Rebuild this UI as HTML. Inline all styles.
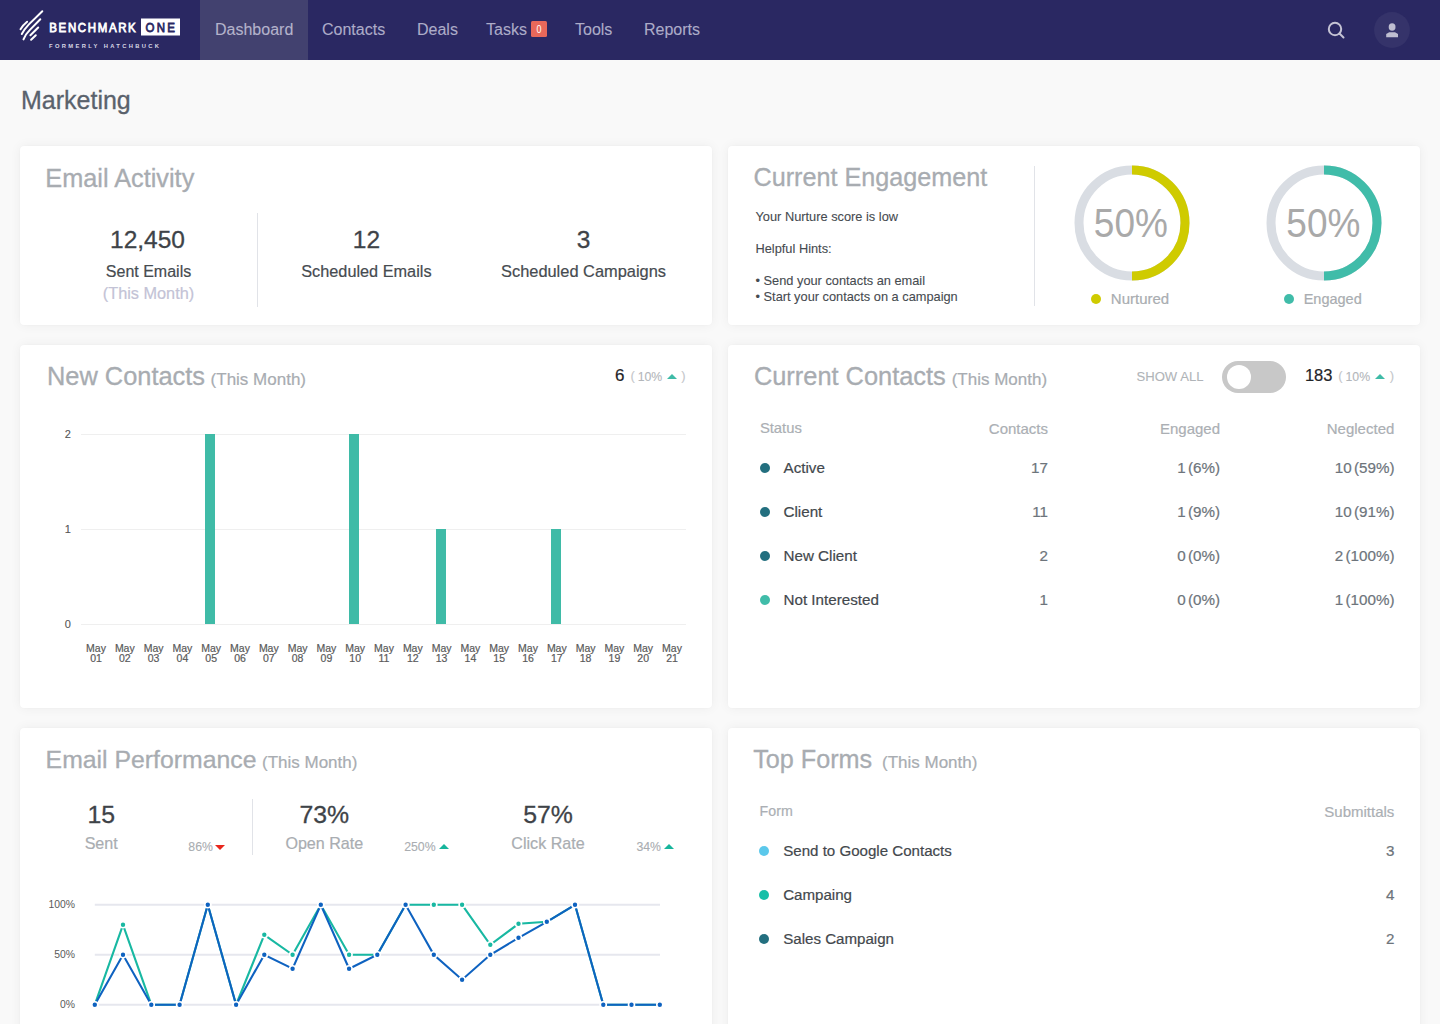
<!DOCTYPE html>
<html><head><meta charset="utf-8"><title>Marketing Dashboard</title>
<style>
html,body{margin:0;padding:0;}
body{width:1440px;height:1024px;overflow:hidden;position:relative;background:#f9f9f9;font-family:"Liberation Sans",sans-serif;}
.t{position:absolute;white-space:nowrap;}
.r{position:absolute;}
.card{position:absolute;background:#fff;border-radius:4px;box-shadow:0 0 12px rgba(0,0,0,0.055),0 0 2px rgba(0,0,0,0.03);}
</style></head><body>
<div class="r" style="left:0px;top:0px;width:1440px;height:60px;background:#2a2862;"></div>
<div class="r" style="left:200px;top:0px;width:108px;height:60px;background:#42416f;"></div>
<div class="t" style="left:215px;top:21.96px;font-size:16px;line-height:16px;color:#b4b3cb;-webkit-text-stroke:0.2px currentColor;-webkit-text-stroke:0.1px currentColor;">Dashboard</div>
<div class="t" style="left:322px;top:21.96px;font-size:16px;line-height:16px;color:#adacc8;-webkit-text-stroke:0.2px currentColor;-webkit-text-stroke:0.1px currentColor;">Contacts</div>
<div class="t" style="left:417px;top:21.96px;font-size:16px;line-height:16px;color:#adacc8;-webkit-text-stroke:0.2px currentColor;-webkit-text-stroke:0.1px currentColor;">Deals</div>
<div class="t" style="left:486px;top:21.96px;font-size:16px;line-height:16px;color:#adacc8;-webkit-text-stroke:0.2px currentColor;-webkit-text-stroke:0.1px currentColor;">Tasks</div>
<div class="t" style="left:575px;top:21.96px;font-size:16px;line-height:16px;color:#adacc8;-webkit-text-stroke:0.2px currentColor;-webkit-text-stroke:0.1px currentColor;">Tools</div>
<div class="t" style="left:644px;top:21.96px;font-size:16px;line-height:16px;color:#adacc8;-webkit-text-stroke:0.2px currentColor;-webkit-text-stroke:0.1px currentColor;">Reports</div>
<div class="r" style="left:531px;top:21px;width:16px;height:16px;background:#e8685a;border-radius:1.5px;"></div>
<div class="t" style="left:531.0px;width:16px;top:24.11px;font-size:10.5px;line-height:10.5px;color:#fff;text-align:center;-webkit-text-stroke:0.1px currentColor;-webkit-text-stroke:0;transform:scaleX(0.85);">0</div>
<svg class="r" style="left:0;top:0" width="190" height="60" viewBox="0 0 190 60">
<g stroke="#fff" stroke-width="2" stroke-linecap="round" fill="none">
<path d="M42.3 11.2 L28.9 24.4 Q24.5 29 21.8 34"/>
<path d="M27.1 21.7 Q23 25 20.5 29.2"/>
<path d="M40.3 19.3 L29.9 29.9 Q25.3 34.5 23.5 39.4"/>
<path d="M38.2 27.5 L30.4 35.3"/>
<path d="M35.8 35.3 L31.1 39.8"/>
</g>
<text transform="translate(49.3,32) scale(1,1.15)" x="0" y="0" textLength="86.5" lengthAdjust="spacing" font-family="Liberation Sans" font-weight="400" font-size="11.5" fill="#fff" stroke="#fff" stroke-width="0.7">BENCHMARK</text>
<rect x="141" y="18.5" width="39" height="17" fill="#fff"/>
<text transform="translate(145.5,32) scale(1,1.15)" x="0" y="0" textLength="29.5" lengthAdjust="spacing" font-family="Liberation Sans" font-weight="400" font-size="11.5" fill="#2a2862" stroke="#2a2862" stroke-width="0.7">ONE</text>
<text x="49" y="48.2" textLength="110" lengthAdjust="spacing" font-family="Liberation Sans" font-weight="700" font-size="5.8" fill="#d8d8e4">FORMERLY HATCHBUCK</text>
</svg>
<svg class="r" style="left:1320;top:14px;left:1320px" width="32" height="32" viewBox="0 0 32 32">
<circle cx="15" cy="15" r="6.2" stroke="#c4c3d4" stroke-width="2" fill="none"/>
<line x1="19.5" y1="19.5" x2="23.5" y2="23.5" stroke="#c4c3d4" stroke-width="2" stroke-linecap="round"/>
</svg>
<svg class="r" style="left:1371.6px;top:9.65px" width="40" height="40" viewBox="0 0 40 40">
<circle cx="20" cy="20" r="17.9" fill="#35336a"/>
<ellipse cx="20.1" cy="16.95" rx="3.4" ry="3.75" fill="#bfbed1"/>
<path d="M14.2 27.35 L14.2 23.9 L17.2 22.3 L23 22.3 L26 23.9 L26 27.35 Z" fill="#bfbed1"/>
</svg>
<div class="t" style="left:21px;top:87.74px;font-size:25px;line-height:25px;color:#5a626c;-webkit-text-stroke:0.3px currentColor;">Marketing</div>
<div class="card" style="left:20px;top:146px;width:692px;height:179px"></div>
<div class="t" style="left:45.3px;top:165.58px;font-size:25.3px;line-height:25.3px;color:#a8acb1;-webkit-text-stroke:0.3px currentColor;">Email Activity</div>
<div class="t" style="left:47.5px;width:200px;top:227.56px;font-size:24.5px;line-height:24.5px;color:#3e4348;text-align:center;-webkit-text-stroke:0.3px currentColor;">12,450</div>
<div class="t" style="left:48.5px;width:200px;top:263.66px;font-size:16px;line-height:16px;color:#464b50;text-align:center;-webkit-text-stroke:0.2px currentColor;">Sent Emails</div>
<div class="t" style="left:48.5px;width:200px;top:284.70px;font-size:16.3px;line-height:16.3px;color:#c3c3d6;text-align:center;-webkit-text-stroke:0.2px currentColor;">(This Month)</div>
<div class="r" style="left:257px;top:213px;width:1px;height:94px;background:#e1e3e8;"></div>
<div class="t" style="left:266.4px;width:200px;top:227.56px;font-size:24.5px;line-height:24.5px;color:#3e4348;text-align:center;-webkit-text-stroke:0.3px currentColor;">12</div>
<div class="t" style="left:266.4px;width:200px;top:263.40px;font-size:16.3px;line-height:16.3px;color:#464b50;text-align:center;-webkit-text-stroke:0.2px currentColor;">Scheduled Emails</div>
<div class="t" style="left:483.5px;width:200px;top:227.56px;font-size:24.5px;line-height:24.5px;color:#3e4348;text-align:center;-webkit-text-stroke:0.3px currentColor;">3</div>
<div class="t" style="left:458.5px;width:250px;top:263.32px;font-size:16.4px;line-height:16.4px;color:#464b50;text-align:center;-webkit-text-stroke:0.2px currentColor;">Scheduled Campaigns</div>
<div class="card" style="left:728px;top:146px;width:692px;height:179px"></div>
<div class="t" style="left:753.5px;top:164.67px;font-size:25.2px;line-height:25.2px;color:#a8acb1;-webkit-text-stroke:0.3px currentColor;">Current Engagement</div>
<div class="t" style="left:755.5px;top:211.36px;font-size:12.8px;line-height:12.8px;color:#464b50;-webkit-text-stroke:0.1px currentColor;">Your Nurture score is low</div>
<div class="t" style="left:755.5px;top:242.96px;font-size:12.8px;line-height:12.8px;color:#464b50;-webkit-text-stroke:0.1px currentColor;">Helpful Hints:</div>
<div class="t" style="left:755.5px;top:274.66px;font-size:12.8px;line-height:12.8px;color:#464b50;-webkit-text-stroke:0.1px currentColor;">• Send your contacts an email</div>
<div class="t" style="left:755.5px;top:290.86px;font-size:12.8px;line-height:12.8px;color:#464b50;-webkit-text-stroke:0.1px currentColor;">• Start your contacts on a campaign</div>
<div class="r" style="left:1034px;top:166px;width:1px;height:140px;background:#e1e3e8;"></div>
<svg class="r" style="left:1071.5px;top:163.3px" width="120" height="120" viewBox="0 0 120 120">
<circle cx="60" cy="60" r="53" stroke="#d9dde3" stroke-width="9" fill="none"/>
<path d="M60 7 A53 53 0 0 1 60 113" stroke="#cfcb00" stroke-width="9" fill="none"/>
</svg>
<svg class="r" style="left:1263.5px;top:163.3px" width="120" height="120" viewBox="0 0 120 120">
<circle cx="60" cy="60" r="53" stroke="#d9dde3" stroke-width="9" fill="none"/>
<path d="M60 7 A53 53 0 0 1 60 113" stroke="#40bca9" stroke-width="9" fill="none"/>
</svg>
<div class="t" style="left:1070.9px;width:120px;top:206.08px;font-size:37px;line-height:37px;color:#a9a9a9;text-align:center;-webkit-text-stroke:0.3px currentColor;transform:scaleY(1.08);transform-origin:50% 86%;-webkit-text-stroke:0;">50%</div>
<div class="t" style="left:1263.4px;width:120px;top:206.08px;font-size:37px;line-height:37px;color:#a9a9a9;text-align:center;-webkit-text-stroke:0.3px currentColor;transform:scaleY(1.08);transform-origin:50% 86%;-webkit-text-stroke:0;">50%</div>
<div class="r" style="left:1091px;top:293.6px;width:10px;height:10px;background:#cfcb00;border-radius:50%;"></div>
<div class="t" style="left:1110.8px;top:291.10px;font-size:15px;line-height:15px;color:#a9adb1;-webkit-text-stroke:0.2px currentColor;">Nurtured</div>
<div class="r" style="left:1284px;top:293.6px;width:10px;height:10px;background:#40bca9;border-radius:50%;"></div>
<div class="t" style="left:1303.7px;top:291.53px;font-size:14.5px;line-height:14.5px;color:#a9adb1;-webkit-text-stroke:0.2px currentColor;">Engaged</div>
<div class="card" style="left:20px;top:345px;width:692px;height:363px"></div>
<div class="t" style="left:47px;top:363.70px;font-size:25.4px;line-height:25.4px;color:#a8acb1;-webkit-text-stroke:0.3px currentColor;">New Contacts</div>
<div class="t" style="left:210.6px;top:370.81px;font-size:17px;line-height:17px;color:#a8acb1;-webkit-text-stroke:0.2px currentColor;">(This Month)</div>
<div class="t" style="left:615px;top:366.61px;font-size:17px;line-height:17px;color:#1f2428;-webkit-text-stroke:0.2px currentColor;">6</div>
<div class="t" style="left:630.5px;top:368.60px;font-size:13px;line-height:13px;color:#c4c6ca;-webkit-text-stroke:0.1px currentColor;">(</div>
<div class="t" style="left:637.7px;top:370.59px;font-size:12.3px;line-height:12.3px;color:#b3b6ba;-webkit-text-stroke:0.1px currentColor;">10%</div>
<svg class="r" style="left:667px;top:374px" width="10" height="5"><path d="M0 5 L5 0 L10 5Z" fill="#3fbba7"/></svg>
<div class="t" style="left:681.3px;top:368.60px;font-size:13px;line-height:13px;color:#c4c6ca;-webkit-text-stroke:0.1px currentColor;">)</div>
<div class="r" style="left:81px;top:433.5px;width:605px;height:1px;background:#efefef;"></div>
<div class="t" style="right:1369.2px;top:428.69px;font-size:11px;line-height:11px;color:#555;text-align:right;-webkit-text-stroke:0.1px currentColor;-webkit-text-stroke:0.1px currentColor;">2</div>
<div class="r" style="left:81px;top:528.5px;width:605px;height:1px;background:#efefef;"></div>
<div class="t" style="right:1369.2px;top:523.69px;font-size:11px;line-height:11px;color:#555;text-align:right;-webkit-text-stroke:0.1px currentColor;-webkit-text-stroke:0.1px currentColor;">1</div>
<div class="r" style="left:81px;top:623.5px;width:605px;height:1px;background:#efefef;"></div>
<div class="t" style="right:1369.2px;top:618.69px;font-size:11px;line-height:11px;color:#555;text-align:right;-webkit-text-stroke:0.1px currentColor;-webkit-text-stroke:0.1px currentColor;">0</div>
<div class="t" style="left:76.0px;width:40px;top:642.5px;font-size:10.5px;line-height:10px;color:#5a5a5a;text-align:center;-webkit-text-stroke:0.2px currentColor">May<br>01</div>
<div class="t" style="left:104.8px;width:40px;top:642.5px;font-size:10.5px;line-height:10px;color:#5a5a5a;text-align:center;-webkit-text-stroke:0.2px currentColor">May<br>02</div>
<div class="t" style="left:133.6px;width:40px;top:642.5px;font-size:10.5px;line-height:10px;color:#5a5a5a;text-align:center;-webkit-text-stroke:0.2px currentColor">May<br>03</div>
<div class="t" style="left:162.4px;width:40px;top:642.5px;font-size:10.5px;line-height:10px;color:#5a5a5a;text-align:center;-webkit-text-stroke:0.2px currentColor">May<br>04</div>
<div class="t" style="left:191.2px;width:40px;top:642.5px;font-size:10.5px;line-height:10px;color:#5a5a5a;text-align:center;-webkit-text-stroke:0.2px currentColor">May<br>05</div>
<div class="t" style="left:220.0px;width:40px;top:642.5px;font-size:10.5px;line-height:10px;color:#5a5a5a;text-align:center;-webkit-text-stroke:0.2px currentColor">May<br>06</div>
<div class="t" style="left:248.8px;width:40px;top:642.5px;font-size:10.5px;line-height:10px;color:#5a5a5a;text-align:center;-webkit-text-stroke:0.2px currentColor">May<br>07</div>
<div class="t" style="left:277.6px;width:40px;top:642.5px;font-size:10.5px;line-height:10px;color:#5a5a5a;text-align:center;-webkit-text-stroke:0.2px currentColor">May<br>08</div>
<div class="t" style="left:306.4px;width:40px;top:642.5px;font-size:10.5px;line-height:10px;color:#5a5a5a;text-align:center;-webkit-text-stroke:0.2px currentColor">May<br>09</div>
<div class="t" style="left:335.2px;width:40px;top:642.5px;font-size:10.5px;line-height:10px;color:#5a5a5a;text-align:center;-webkit-text-stroke:0.2px currentColor">May<br>10</div>
<div class="t" style="left:364.0px;width:40px;top:642.5px;font-size:10.5px;line-height:10px;color:#5a5a5a;text-align:center;-webkit-text-stroke:0.2px currentColor">May<br>11</div>
<div class="t" style="left:392.8px;width:40px;top:642.5px;font-size:10.5px;line-height:10px;color:#5a5a5a;text-align:center;-webkit-text-stroke:0.2px currentColor">May<br>12</div>
<div class="t" style="left:421.6px;width:40px;top:642.5px;font-size:10.5px;line-height:10px;color:#5a5a5a;text-align:center;-webkit-text-stroke:0.2px currentColor">May<br>13</div>
<div class="t" style="left:450.40000000000003px;width:40px;top:642.5px;font-size:10.5px;line-height:10px;color:#5a5a5a;text-align:center;-webkit-text-stroke:0.2px currentColor">May<br>14</div>
<div class="t" style="left:479.2px;width:40px;top:642.5px;font-size:10.5px;line-height:10px;color:#5a5a5a;text-align:center;-webkit-text-stroke:0.2px currentColor">May<br>15</div>
<div class="t" style="left:508.0px;width:40px;top:642.5px;font-size:10.5px;line-height:10px;color:#5a5a5a;text-align:center;-webkit-text-stroke:0.2px currentColor">May<br>16</div>
<div class="t" style="left:536.8px;width:40px;top:642.5px;font-size:10.5px;line-height:10px;color:#5a5a5a;text-align:center;-webkit-text-stroke:0.2px currentColor">May<br>17</div>
<div class="t" style="left:565.6px;width:40px;top:642.5px;font-size:10.5px;line-height:10px;color:#5a5a5a;text-align:center;-webkit-text-stroke:0.2px currentColor">May<br>18</div>
<div class="t" style="left:594.4px;width:40px;top:642.5px;font-size:10.5px;line-height:10px;color:#5a5a5a;text-align:center;-webkit-text-stroke:0.2px currentColor">May<br>19</div>
<div class="t" style="left:623.2px;width:40px;top:642.5px;font-size:10.5px;line-height:10px;color:#5a5a5a;text-align:center;-webkit-text-stroke:0.2px currentColor">May<br>20</div>
<div class="t" style="left:652.0px;width:40px;top:642.5px;font-size:10.5px;line-height:10px;color:#5a5a5a;text-align:center;-webkit-text-stroke:0.2px currentColor">May<br>21</div>
<div class="r" style="left:205.2px;top:434px;width:10.2px;height:190px;background:#3fbba7;"></div>
<div class="r" style="left:349.2px;top:434px;width:10.2px;height:190px;background:#3fbba7;"></div>
<div class="r" style="left:435.6px;top:529px;width:10.2px;height:95px;background:#3fbba7;"></div>
<div class="r" style="left:550.8px;top:529px;width:10.2px;height:95px;background:#3fbba7;"></div>
<div class="card" style="left:728px;top:345px;width:692px;height:363px"></div>
<div class="t" style="left:753.9px;top:363.70px;font-size:25.4px;line-height:25.4px;color:#a8acb1;-webkit-text-stroke:0.3px currentColor;">Current Contacts</div>
<div class="t" style="left:951.7px;top:370.81px;font-size:17px;line-height:17px;color:#a8acb1;-webkit-text-stroke:0.2px currentColor;">(This Month)</div>
<div class="t" style="left:1136.5px;top:370.11px;font-size:13.1px;line-height:13.1px;color:#b0b4b8;-webkit-text-stroke:0.1px currentColor;">SHOW ALL</div>
<div class="r" style="left:1222px;top:361px;width:64px;height:32px;background:#c8c8c8;border-radius:16px;"></div>
<div class="r" style="left:1226.7px;top:364.7px;width:24.6px;height:24.6px;background:#fff;border-radius:50%;"></div>
<div class="t" style="left:1304.9px;top:366.83px;font-size:16.5px;line-height:16.5px;color:#1f2428;-webkit-text-stroke:0.2px currentColor;">183</div>
<div class="t" style="left:1338.3px;top:368.60px;font-size:13px;line-height:13px;color:#c4c6ca;-webkit-text-stroke:0.1px currentColor;">(</div>
<div class="t" style="left:1345.5px;top:370.59px;font-size:12.3px;line-height:12.3px;color:#b3b6ba;-webkit-text-stroke:0.1px currentColor;">10%</div>
<svg class="r" style="left:1375px;top:374px" width="10" height="5"><path d="M0 5 L5 0 L10 5Z" fill="#3fbba7"/></svg>
<div class="t" style="left:1389.8px;top:368.60px;font-size:13px;line-height:13px;color:#c4c6ca;-webkit-text-stroke:0.1px currentColor;">)</div>
<div class="t" style="left:759.9px;top:421.07px;font-size:14.8px;line-height:14.8px;color:#abafb4;-webkit-text-stroke:0.2px currentColor;">Status</div>
<div class="t" style="right:392px;top:420.90px;font-size:15px;line-height:15px;color:#abafb4;text-align:right;-webkit-text-stroke:0.2px currentColor;">Contacts</div>
<div class="t" style="right:220px;top:420.90px;font-size:15px;line-height:15px;color:#abafb4;text-align:right;-webkit-text-stroke:0.2px currentColor;">Engaged</div>
<div class="t" style="right:45.700000000000045px;top:420.90px;font-size:15px;line-height:15px;color:#abafb4;text-align:right;-webkit-text-stroke:0.2px currentColor;">Neglected</div>
<div class="r" style="left:759.5px;top:462.7px;width:10px;height:10px;background:#236f7f;border-radius:50%;"></div>
<div class="t" style="left:783.5px;top:459.83px;font-size:15.2px;line-height:15.2px;color:#43484d;-webkit-text-stroke:0.2px currentColor;">Active</div>
<div class="t" style="right:392px;top:459.83px;font-size:15.2px;line-height:15.2px;color:#6d747b;text-align:right;-webkit-text-stroke:0.2px currentColor;">17</div>
<div class="t" style="right:220px;top:459.83px;font-size:15.2px;line-height:15.2px;color:#6d747b;text-align:right;-webkit-text-stroke:0.2px currentColor;word-spacing:-2px;">1 (6%)</div>
<div class="t" style="right:45.5px;top:459.83px;font-size:15.2px;line-height:15.2px;color:#6d747b;text-align:right;-webkit-text-stroke:0.2px currentColor;word-spacing:-2px;">10 (59%)</div>
<div class="r" style="left:759.5px;top:506.7px;width:10px;height:10px;background:#236f7f;border-radius:50%;"></div>
<div class="t" style="left:783.5px;top:503.83px;font-size:15.2px;line-height:15.2px;color:#43484d;-webkit-text-stroke:0.2px currentColor;">Client</div>
<div class="t" style="right:392px;top:503.83px;font-size:15.2px;line-height:15.2px;color:#6d747b;text-align:right;-webkit-text-stroke:0.2px currentColor;">11</div>
<div class="t" style="right:220px;top:503.83px;font-size:15.2px;line-height:15.2px;color:#6d747b;text-align:right;-webkit-text-stroke:0.2px currentColor;word-spacing:-2px;">1 (9%)</div>
<div class="t" style="right:45.5px;top:503.83px;font-size:15.2px;line-height:15.2px;color:#6d747b;text-align:right;-webkit-text-stroke:0.2px currentColor;word-spacing:-2px;">10 (91%)</div>
<div class="r" style="left:759.5px;top:550.7px;width:10px;height:10px;background:#236f7f;border-radius:50%;"></div>
<div class="t" style="left:783.5px;top:547.83px;font-size:15.2px;line-height:15.2px;color:#43484d;-webkit-text-stroke:0.2px currentColor;">New Client</div>
<div class="t" style="right:392px;top:547.83px;font-size:15.2px;line-height:15.2px;color:#6d747b;text-align:right;-webkit-text-stroke:0.2px currentColor;">2</div>
<div class="t" style="right:220px;top:547.83px;font-size:15.2px;line-height:15.2px;color:#6d747b;text-align:right;-webkit-text-stroke:0.2px currentColor;word-spacing:-2px;">0 (0%)</div>
<div class="t" style="right:45.5px;top:547.83px;font-size:15.2px;line-height:15.2px;color:#6d747b;text-align:right;-webkit-text-stroke:0.2px currentColor;word-spacing:-2px;">2 (100%)</div>
<div class="r" style="left:759.5px;top:594.7px;width:10px;height:10px;background:#40bca9;border-radius:50%;"></div>
<div class="t" style="left:783.5px;top:591.83px;font-size:15.2px;line-height:15.2px;color:#43484d;-webkit-text-stroke:0.2px currentColor;">Not Interested</div>
<div class="t" style="right:392px;top:591.83px;font-size:15.2px;line-height:15.2px;color:#6d747b;text-align:right;-webkit-text-stroke:0.2px currentColor;">1</div>
<div class="t" style="right:220px;top:591.83px;font-size:15.2px;line-height:15.2px;color:#6d747b;text-align:right;-webkit-text-stroke:0.2px currentColor;word-spacing:-2px;">0 (0%)</div>
<div class="t" style="right:45.5px;top:591.83px;font-size:15.2px;line-height:15.2px;color:#6d747b;text-align:right;-webkit-text-stroke:0.2px currentColor;word-spacing:-2px;">1 (100%)</div>
<div class="card" style="left:20px;top:728px;width:692px;height:330px"></div>
<div class="t" style="left:45.6px;top:747.61px;font-size:24.8px;line-height:24.8px;color:#a8acb1;-webkit-text-stroke:0.3px currentColor;">Email Performance</div>
<div class="t" style="left:262px;top:753.51px;font-size:17px;line-height:17px;color:#a8acb1;-webkit-text-stroke:0.2px currentColor;">(This Month)</div>
<div class="t" style="left:1.2000000000000028px;width:200px;top:802.81px;font-size:24.8px;line-height:24.8px;color:#3e4348;text-align:center;-webkit-text-stroke:0.3px currentColor;">15</div>
<div class="t" style="left:1.2000000000000028px;width:200px;top:834.97px;font-size:16.1px;line-height:16.1px;color:#a9adb1;text-align:center;-webkit-text-stroke:0.2px currentColor;">Sent</div>
<div class="t" style="left:188.3px;top:840.59px;font-size:12.3px;line-height:12.3px;color:#a9adb1;-webkit-text-stroke:0.1px currentColor;">86%</div>
<svg class="r" style="left:215.2px;top:845.1px" width="10" height="5"><path d="M0 0 L10 0 L5 5Z" fill="#e8261c"/></svg>
<div class="t" style="left:224.3px;width:200px;top:802.81px;font-size:24.8px;line-height:24.8px;color:#3e4348;text-align:center;-webkit-text-stroke:0.3px currentColor;">73%</div>
<div class="t" style="left:224.3px;width:200px;top:834.97px;font-size:16.1px;line-height:16.1px;color:#a9adb1;text-align:center;-webkit-text-stroke:0.2px currentColor;">Open Rate</div>
<div class="t" style="left:404.2px;top:840.59px;font-size:12.3px;line-height:12.3px;color:#a9adb1;-webkit-text-stroke:0.1px currentColor;">250%</div>
<svg class="r" style="left:439.3px;top:844.4px" width="10" height="5"><path d="M0 5 L5 0 L10 5Z" fill="#17b59c"/></svg>
<div class="t" style="left:448.0px;width:200px;top:802.81px;font-size:24.8px;line-height:24.8px;color:#3e4348;text-align:center;-webkit-text-stroke:0.3px currentColor;">57%</div>
<div class="t" style="left:448.0px;width:200px;top:834.97px;font-size:16.1px;line-height:16.1px;color:#a9adb1;text-align:center;-webkit-text-stroke:0.2px currentColor;">Click Rate</div>
<div class="t" style="left:636.4px;top:840.59px;font-size:12.3px;line-height:12.3px;color:#a9adb1;-webkit-text-stroke:0.1px currentColor;">34%</div>
<svg class="r" style="left:663.6px;top:844.4px" width="10" height="5"><path d="M0 5 L5 0 L10 5Z" fill="#17b59c"/></svg>
<div class="r" style="left:252px;top:799px;width:1px;height:56px;background:#e1e3e8;"></div>
<svg class="r" style="left:0;top:0" width="720" height="1024">
<line x1="94.8" y1="904.8" x2="660" y2="904.8" stroke="#e6e7ee" stroke-width="2"/>
<line x1="94.8" y1="954.8" x2="660" y2="954.8" stroke="#e6e7ee" stroke-width="2"/>
<line x1="94.8" y1="1004.7" x2="660" y2="1004.7" stroke="#e6e7ee" stroke-width="2"/>
</svg>
<div class="t" style="right:1365px;top:899.80px;font-size:10.4px;line-height:10.4px;color:#5a5a5a;text-align:right;-webkit-text-stroke:0.1px currentColor;-webkit-text-stroke:0;">100%</div>
<div class="t" style="right:1365px;top:949.80px;font-size:10.4px;line-height:10.4px;color:#5a5a5a;text-align:right;-webkit-text-stroke:0.1px currentColor;-webkit-text-stroke:0;">50%</div>
<div class="t" style="right:1365px;top:999.70px;font-size:10.4px;line-height:10.4px;color:#5a5a5a;text-align:right;-webkit-text-stroke:0.1px currentColor;-webkit-text-stroke:0;">0%</div>
<svg class="r" style="left:0;top:0" width="720" height="1024"><polyline points="94.8,1004.7 123.0,924.8 151.3,1004.7 179.6,1004.7 207.8,904.8 236.1,1004.7 264.3,934.8 292.6,954.8 320.8,904.8 349.1,954.8 377.3,954.8 405.6,904.8 433.8,904.8 462.1,904.8 490.3,944.8 518.5,923.8 546.8,921.8 575.0,904.8 603.3,1004.7 631.5,1004.7 659.8,1004.7" stroke="#18b8a2" stroke-width="2.1" fill="none" stroke-linejoin="miter"/><circle cx="94.8" cy="1004.7" r="3.0" fill="#18b8a2" stroke="#fff" stroke-width="1.6"/><circle cx="123.0" cy="924.8" r="3.0" fill="#18b8a2" stroke="#fff" stroke-width="1.6"/><circle cx="151.3" cy="1004.7" r="3.0" fill="#18b8a2" stroke="#fff" stroke-width="1.6"/><circle cx="179.6" cy="1004.7" r="3.0" fill="#18b8a2" stroke="#fff" stroke-width="1.6"/><circle cx="207.8" cy="904.8" r="3.0" fill="#18b8a2" stroke="#fff" stroke-width="1.6"/><circle cx="236.1" cy="1004.7" r="3.0" fill="#18b8a2" stroke="#fff" stroke-width="1.6"/><circle cx="264.3" cy="934.8" r="3.0" fill="#18b8a2" stroke="#fff" stroke-width="1.6"/><circle cx="292.6" cy="954.8" r="3.0" fill="#18b8a2" stroke="#fff" stroke-width="1.6"/><circle cx="320.8" cy="904.8" r="3.0" fill="#18b8a2" stroke="#fff" stroke-width="1.6"/><circle cx="349.1" cy="954.8" r="3.0" fill="#18b8a2" stroke="#fff" stroke-width="1.6"/><circle cx="377.3" cy="954.8" r="3.0" fill="#18b8a2" stroke="#fff" stroke-width="1.6"/><circle cx="405.6" cy="904.8" r="3.0" fill="#18b8a2" stroke="#fff" stroke-width="1.6"/><circle cx="433.8" cy="904.8" r="3.0" fill="#18b8a2" stroke="#fff" stroke-width="1.6"/><circle cx="462.1" cy="904.8" r="3.0" fill="#18b8a2" stroke="#fff" stroke-width="1.6"/><circle cx="490.3" cy="944.8" r="3.0" fill="#18b8a2" stroke="#fff" stroke-width="1.6"/><circle cx="518.5" cy="923.8" r="3.0" fill="#18b8a2" stroke="#fff" stroke-width="1.6"/><circle cx="546.8" cy="921.8" r="3.0" fill="#18b8a2" stroke="#fff" stroke-width="1.6"/><circle cx="575.0" cy="904.8" r="3.0" fill="#18b8a2" stroke="#fff" stroke-width="1.6"/><circle cx="603.3" cy="1004.7" r="3.0" fill="#18b8a2" stroke="#fff" stroke-width="1.6"/><circle cx="631.5" cy="1004.7" r="3.0" fill="#18b8a2" stroke="#fff" stroke-width="1.6"/><circle cx="659.8" cy="1004.7" r="3.0" fill="#18b8a2" stroke="#fff" stroke-width="1.6"/><polyline points="94.8,1004.7 123.0,954.8 151.3,1004.7 179.6,1004.7 207.8,904.8 236.1,1004.7 264.3,954.8 292.6,968.7 320.8,904.8 349.1,968.7 377.3,954.8 405.6,904.8 433.8,954.8 462.1,979.7 490.3,954.8 518.5,937.8 546.8,921.8 575.0,904.8 603.3,1004.7 631.5,1004.7 659.8,1004.7" stroke="#0e62c0" stroke-width="2.1" fill="none" stroke-linejoin="miter"/><circle cx="94.8" cy="1004.7" r="3.0" fill="#0e62c0" stroke="#fff" stroke-width="1.6"/><circle cx="123.0" cy="954.8" r="3.0" fill="#0e62c0" stroke="#fff" stroke-width="1.6"/><circle cx="151.3" cy="1004.7" r="3.0" fill="#0e62c0" stroke="#fff" stroke-width="1.6"/><circle cx="179.6" cy="1004.7" r="3.0" fill="#0e62c0" stroke="#fff" stroke-width="1.6"/><circle cx="207.8" cy="904.8" r="3.0" fill="#0e62c0" stroke="#fff" stroke-width="1.6"/><circle cx="236.1" cy="1004.7" r="3.0" fill="#0e62c0" stroke="#fff" stroke-width="1.6"/><circle cx="264.3" cy="954.8" r="3.0" fill="#0e62c0" stroke="#fff" stroke-width="1.6"/><circle cx="292.6" cy="968.7" r="3.0" fill="#0e62c0" stroke="#fff" stroke-width="1.6"/><circle cx="320.8" cy="904.8" r="3.0" fill="#0e62c0" stroke="#fff" stroke-width="1.6"/><circle cx="349.1" cy="968.7" r="3.0" fill="#0e62c0" stroke="#fff" stroke-width="1.6"/><circle cx="377.3" cy="954.8" r="3.0" fill="#0e62c0" stroke="#fff" stroke-width="1.6"/><circle cx="405.6" cy="904.8" r="3.0" fill="#0e62c0" stroke="#fff" stroke-width="1.6"/><circle cx="433.8" cy="954.8" r="3.0" fill="#0e62c0" stroke="#fff" stroke-width="1.6"/><circle cx="462.1" cy="979.7" r="3.0" fill="#0e62c0" stroke="#fff" stroke-width="1.6"/><circle cx="490.3" cy="954.8" r="3.0" fill="#0e62c0" stroke="#fff" stroke-width="1.6"/><circle cx="518.5" cy="937.8" r="3.0" fill="#0e62c0" stroke="#fff" stroke-width="1.6"/><circle cx="546.8" cy="921.8" r="3.0" fill="#0e62c0" stroke="#fff" stroke-width="1.6"/><circle cx="575.0" cy="904.8" r="3.0" fill="#0e62c0" stroke="#fff" stroke-width="1.6"/><circle cx="603.3" cy="1004.7" r="3.0" fill="#0e62c0" stroke="#fff" stroke-width="1.6"/><circle cx="631.5" cy="1004.7" r="3.0" fill="#0e62c0" stroke="#fff" stroke-width="1.6"/><circle cx="659.8" cy="1004.7" r="3.0" fill="#0e62c0" stroke="#fff" stroke-width="1.6"/></svg>
<div class="card" style="left:728px;top:728px;width:692px;height:330px"></div>
<div class="t" style="left:753.2px;top:746.57px;font-size:25.2px;line-height:25.2px;color:#a8acb1;-webkit-text-stroke:0.3px currentColor;">Top Forms</div>
<div class="t" style="left:882px;top:753.51px;font-size:17px;line-height:17px;color:#a8acb1;-webkit-text-stroke:0.2px currentColor;">(This Month)</div>
<div class="t" style="left:759.6px;top:804.48px;font-size:14.2px;line-height:14.2px;color:#abafb4;-webkit-text-stroke:0.2px currentColor;">Form</div>
<div class="t" style="right:45.700000000000045px;top:803.80px;font-size:15px;line-height:15px;color:#abafb4;text-align:right;-webkit-text-stroke:0.2px currentColor;">Submittals</div>
<div class="r" style="left:759.3px;top:846px;width:10px;height:10px;background:#5bc8eb;border-radius:50%;"></div>
<div class="t" style="left:783.2px;top:843.22px;font-size:15.1px;line-height:15.1px;color:#43484d;-webkit-text-stroke:0.2px currentColor;">Send to Google Contacts</div>
<div class="t" style="right:45.5px;top:843.13px;font-size:15.2px;line-height:15.2px;color:#6d747b;text-align:right;-webkit-text-stroke:0.2px currentColor;">3</div>
<div class="r" style="left:759.3px;top:890px;width:10px;height:10px;background:#17bfa8;border-radius:50%;"></div>
<div class="t" style="left:783.2px;top:887.22px;font-size:15.1px;line-height:15.1px;color:#43484d;-webkit-text-stroke:0.2px currentColor;">Campaing</div>
<div class="t" style="right:45.5px;top:887.13px;font-size:15.2px;line-height:15.2px;color:#6d747b;text-align:right;-webkit-text-stroke:0.2px currentColor;">4</div>
<div class="r" style="left:759.3px;top:934px;width:10px;height:10px;background:#236f7f;border-radius:50%;"></div>
<div class="t" style="left:783.2px;top:931.22px;font-size:15.1px;line-height:15.1px;color:#43484d;-webkit-text-stroke:0.2px currentColor;">Sales Campaign</div>
<div class="t" style="right:45.5px;top:931.13px;font-size:15.2px;line-height:15.2px;color:#6d747b;text-align:right;-webkit-text-stroke:0.2px currentColor;">2</div>
</body></html>
